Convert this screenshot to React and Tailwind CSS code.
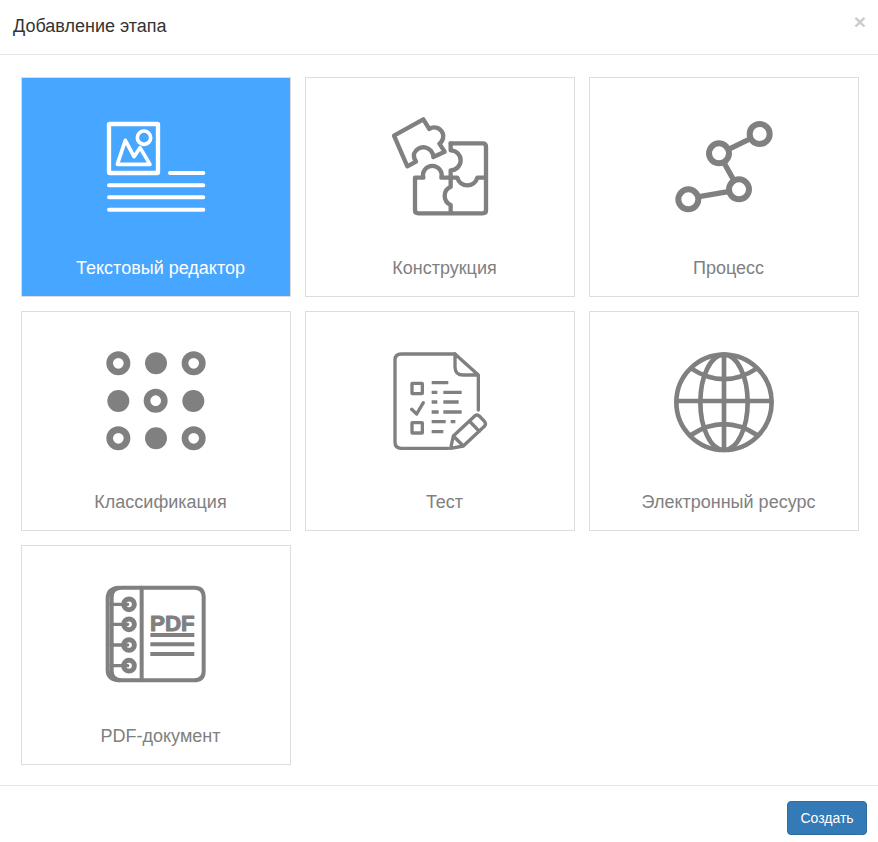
import React from "react";

const G = "#808080";

const Svg = ({ vb, color = G, children }) => (
  <svg width="120" height="120" viewBox={vb} fill="none" stroke={color} strokeLinecap="round" strokeLinejoin="round" className="block shrink-0">
    {children}
  </svg>
);

const TextIcon = () => (
  <Svg vb="18 0 360 360" color="#fff">
    <rect x="57" y="57" width="147" height="147" rx="2" strokeWidth="13" />
    <path d="M82 178 L106 106 L132 155 L150 128 L180 178 Z" strokeWidth="11" />
    <circle cx="162" cy="98" r="20" strokeWidth="11" />
    <path d="M240 204 H340 M57 241 H340 M57 277 H340 M57 314 H340" strokeWidth="12" />
  </Svg>
);

const PuzzleIcon = () => (
  <Svg vb="0 0 360 360">
    <g strokeWidth="13">
      <path d="M42 92 L130 43 L148 72 A26 26 0 1 1 178 116 L194 140 L160 156 A30 30 0 0 0 102 146 Q100 160 108 170 L82 184 Z" />
      <path d="M212 115 H308 Q318 115 318 125 V316 Q318 325 308 325 H115 Q105 325 105 316 V218 H130 A28 28 0 1 1 184 218 H212 V245 A30 30 0 0 0 212 300 V325" />
      <path d="M212 115 V136 A30 30 0 0 1 212 196 V218 H232 A31 31 0 0 0 292 218 H318" />
    </g>
  </Svg>
);

const ProcessIcon = () => (
  <Svg vb="-3 -15 360 360">
    <g strokeWidth="18">
      <circle cx="284" cy="72" r="30" />
      <circle cx="162" cy="130" r="30" />
      <circle cx="222" cy="238" r="30" />
      <circle cx="70" cy="268" r="30" />
    </g>
    <path d="M252 88 L195 116 M178 160 L205 208 M190 245 L102 260" strokeWidth="16" strokeLinecap="butt" />
  </Svg>
);

const DotsIcon = () => (
  <Svg vb="3 -3 360 360">
    <g strokeWidth="20">
      <circle cx="70" cy="70" r="26" />
      <circle cx="296" cy="70" r="26" />
      <circle cx="182" cy="182" r="26" />
      <circle cx="70" cy="295" r="26" />
      <circle cx="296" cy="295" r="26" />
    </g>
    <g fill={G} stroke="none">
      <circle cx="183" cy="70" r="33" />
      <circle cx="70" cy="183" r="33" />
      <circle cx="295" cy="183" r="33" />
      <circle cx="183" cy="295" r="33" />
    </g>
  </Svg>
);

const TestIcon = () => (
  <Svg vb="0 -3 360 360">
    <g strokeWidth="10">
      <path d="M225 42 H64 Q45 42 45 60 V306 Q45 325 64 325 H205" />
      <path d="M225 42 L295 105 V210 M225 42 V80 Q225 105 250 105 H295" />
      <rect x="96" y="130" width="31" height="31" rx="1" />
      <rect x="96" y="248" width="31" height="31" rx="1" />
      <path d="M95 208 L110 222 L130 188" />
      <path d="M155 128 H205 M155 157 H172 M190 157 H245 M155 186 H172 M190 186 H236 M155 216 H176 M190 216 H245 M155 245 H197 M212 245 H226 M155 275 H190" strokeLinecap="butt" />
      <path d="M212 325 L220 288 L285 227 Q292 222 298 228 L314 245 Q319 252 314 258 L250 318 Z M220 288 L250 318 M268 243 L298 274" />
    </g>
  </Svg>
);

const GlobeIcon = () => (
  <Svg vb="-3 -3 360 360">
    <g strokeWidth="14">
      <circle cx="177" cy="187" r="143" />
      <ellipse cx="177" cy="187" rx="71" ry="143" />
      <path d="M177 44 V330 M34 183 H320" strokeLinecap="butt" />
      <path d="M78 85 Q177 150 276 85 M78 285 Q177 220 276 285" strokeLinecap="butt" />
    </g>
  </Svg>
);

const PdfIcon = () => (
  <Svg vb="3 -6 360 360">
    <g strokeWidth="12">
      <path d="M80 38 H298 Q326 38 326 66 V288 Q326 316 298 316 H80 Q50 316 50 288 V66 Q50 38 80 38 Z" />
      <path d="M72 38 Q38 40 38 70 V285 Q38 314 72 316" />
      <path d="M140 38 V316" />
    </g>
    <g strokeWidth="15">
      <circle cx="102" cy="88" r="16" />
      <circle cx="102" cy="148" r="16" />
      <circle cx="102" cy="210" r="16" />
      <circle cx="102" cy="272" r="16" />
    </g>
    <path d="M48 88 H98 M48 148 H98 M48 210 H98 M48 272 H98" strokeWidth="10" />
    <text x="165" y="167" fill={G} stroke={G} strokeWidth="3" fontSize="68" fontWeight="700" textLength="134" lengthAdjust="spacingAndGlyphs" className="font-['Liberation_Sans',sans-serif]">PDF</text>
    <path d="M166 180 H298 M166 208 H298 M166 237 H298" strokeWidth="12" strokeLinecap="butt" />
  </Svg>
);

const items = [
  { label: "Текстовый редактор", Icon: TextIcon, active: true },
  { label: "Конструкция", Icon: PuzzleIcon },
  { label: "Процесс", Icon: ProcessIcon },
  { label: "Классификация", Icon: DotsIcon },
  { label: "Тест", Icon: TestIcon },
  { label: "Электронный ресурс", Icon: GlobeIcon },
  { label: "PDF-документ", Icon: PdfIcon },
];

export default function App() {
  return (
    <div className="w-[878px] h-[842px] bg-white font-['Liberation_Sans',sans-serif] overflow-hidden">
      <header className="h-[55px] border-b border-[#e5e5e5] pl-[13px] pr-[12px] flex items-start justify-between">
        <h4 className="text-[18px] leading-[22px] pt-[15px] text-[#333] font-normal">Добавление этапа</h4>
        <span className="font-bold text-[21px] leading-[21px] pt-[11px] text-[#cccccc]">×</span>
      </header>
      <main className="px-[21px] pt-[22px] pb-[20px] grid grid-cols-[270px_270px_270px] gap-[14px] border-b border-[#e5e5e5] h-[731px] content-start">
        {items.map(({ label, Icon, active }) => (
          <div
            key={label}
            className={
              active
                ? "h-[220px] border border-[#dddddd] bg-[#47a6ff] flex flex-col items-center pt-[27px] text-white"
                : "h-[220px] border border-[#dddddd] bg-white flex flex-col items-center pt-[27px] text-[#808080]"
            }
          >
            <Icon />
            <div className="mt-[33px] pl-[9px] text-[18px] leading-5">{label}</div>
          </div>
        ))}
      </main>
      <footer className="flex justify-end pt-[15px] pr-[11px]">
        <button className="w-[80px] h-[34px] rounded-[4px] bg-[#337ab7] border border-[#2e6da4] text-white text-[14px]">Создать</button>
      </footer>
    </div>
  );
}
